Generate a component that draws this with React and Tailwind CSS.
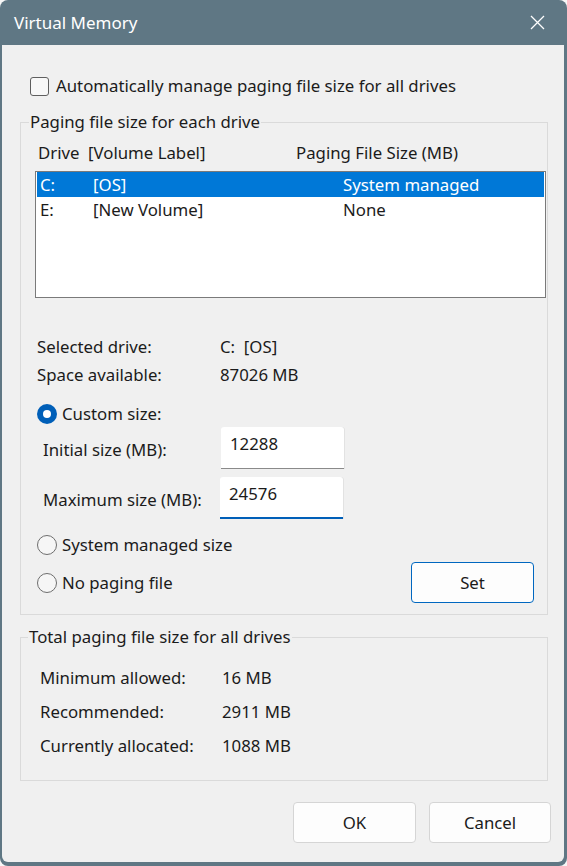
import React, { useState } from 'react';

const FONT = { fontFamily: '"Noto Sans", "Open Sans", sans-serif' };

function Radio({ checked, label, onSelect }) {
  return (
    <label className="flex items-center cursor-default" onClick={onSelect}>
      {checked ? (
        <span className="w-[20px] h-[20px] rounded-full bg-[#005fb8] flex items-center justify-center">
          <span className="w-[8px] h-[8px] rounded-full bg-white" />
        </span>
      ) : (
        <span className="w-[20px] h-[20px] rounded-full border border-[#6e6e6e] bg-[#f6f6f6]" />
      )}
      <span className="ml-[5px]">{label}</span>
    </label>
  );
}

function SizeInput({ value, focused }) {
  return (
    <div
      className={`w-[123px] h-[42px] bg-white rounded-t-[3px] pl-[9px] pt-[4px] shadow-[1px_0_0_#e2e2e2] ${
        focused ? 'border-b-2 border-[#005fb8]' : 'border-b border-[#8a8a8a]'
      }`}
    >
      <span className="leading-[24px]">{value}</span>
    </div>
  );
}

export default function App() {
  const [mode, setMode] = useState('custom');
  const [auto, setAuto] = useState(false);

  return (
    <div className="w-[567px] h-[866px] bg-[#f7f7f7] text-[16.8px] text-[#1b1b1b]" style={FONT}>
      <div className="h-full flex flex-col bg-[#5f7784] rounded-[8px] pl-[2px] pr-[3px] pb-[4px]">
        {/* title bar */}
        <div className="h-[45px] flex items-center justify-between pl-[12px] pr-[18px] text-white">
          <span className="text-[17px]">Virtual Memory</span>
          <svg width="15" height="15" viewBox="0 0 15 15" className="mr-[1px]">
            <path d="M1 1 L14 14 M14 1 L1 14" stroke="white" strokeWidth="1.3" fill="none" />
          </svg>
        </div>

        {/* body */}
        <div className="flex-1 bg-[#f0f0f0] rounded-b-[6px] pl-[18px] pr-[16px] flex flex-col">
          <label className="mt-[31px] h-[20px] flex items-center ml-[10px]" onClick={() => setAuto(!auto)}>
            <span className="w-[19px] h-[19px] rounded-[3px] border border-[#5f5f5f] bg-[#f8f8f8] flex items-center justify-center">
              {auto && (
                <svg width="12" height="10" viewBox="0 0 12 10">
                  <path d="M1 5 L4.5 8.5 L11 1.5" stroke="#1b1b1b" strokeWidth="1.4" fill="none" />
                </svg>
              )}
            </span>
            <span className="ml-[7px]">Automatically manage paging file size for all drives</span>
          </label>

          <fieldset className="mt-[14px] border border-[#dadada] pl-[14px] pr-[1px] pb-[11px]">
            <legend className="ml-[-6px] px-[1px] leading-[24px]">Paging file size for each drive</legend>

            <div className="mt-[7px] h-[24px] flex items-center pl-[3px]">
              <span className="w-[50px]">Drive</span>
              <span className="w-[208px]">[Volume Label]</span>
              <span>Paging File Size (MB)</span>
            </div>

            <div className="mt-[6px] h-[127px] bg-white border border-[#7a7a7a] pl-[1px] pr-[1px]">
              <div className="h-[25px] flex items-center bg-[#0078d7] text-white pl-[3px]">
                <span className="w-[53px]">C:</span>
                <span className="w-[250px]">[OS]</span>
                <span>System managed</span>
              </div>
              <div className="h-[25px] flex items-center pl-[3px]">
                <span className="w-[53px]">E:</span>
                <span className="w-[250px]">[New Volume]</span>
                <span>None</span>
              </div>
            </div>

            <div className="mt-[35px] pl-[2px] grid grid-cols-[183px_1fr]">
              <div className="h-[28px] flex items-center">Selected drive:</div>
              <div className="h-[28px] flex items-center">C:&nbsp;&nbsp;[OS]</div>
              <div className="h-[28px] flex items-center">Space available:</div>
              <div className="h-[28px] flex items-center">87026 MB</div>
            </div>

            <div className="mt-[12px] h-[26px] flex items-center pl-[2px]">
              <Radio checked={mode === 'custom'} label="Custom size:" onSelect={() => setMode('custom')} />
            </div>

            <div className="flex items-start pl-[8px]">
              <span className="w-[178px] mt-[11px] leading-[24px]">Initial size (MB):</span>
              <SizeInput value="12288" />
            </div>
            <div className="mt-[8px] flex items-start pl-[8px]">
              <span className="w-[177px] mt-[11px] leading-[24px]">Maximum size (MB):</span>
              <SizeInput value="24576" focused />
            </div>

            <div className="mt-[13px] h-[26px] flex items-center pl-[2px]">
              <Radio checked={mode === 'system'} label="System managed size" onSelect={() => setMode('system')} />
            </div>
            <div className="mt-[4px] flex items-center justify-between pl-[2px] pr-[12px]">
              <Radio checked={mode === 'none'} label="No paging file" onSelect={() => setMode('none')} />
              <button className="w-[123px] h-[41px] rounded-[4px] border border-[#0067c0] bg-[#fdfdfd]">Set</button>
            </div>
          </fieldset>

          <fieldset className="mt-[10px] border border-[#dadada] pl-[19px] pb-[17px]">
            <legend className="ml-[-12px] px-[1px] leading-[24px]">Total paging file size for all drives</legend>
            <div className="mt-[12px] grid grid-cols-[182px_1fr]">
              <div className="h-[34px] flex items-center">Minimum allowed:</div>
              <div className="h-[34px] flex items-center">16 MB</div>
              <div className="h-[34px] flex items-center">Recommended:</div>
              <div className="h-[34px] flex items-center">2911 MB</div>
              <div className="h-[34px] flex items-center">Currently allocated:</div>
              <div className="h-[34px] flex items-center">1088 MB</div>
            </div>
          </fieldset>

          <div className="mt-[21px] flex justify-end gap-[13px] mr-[-3px]">
            <button className="w-[123px] h-[41px] rounded-[4px] border border-[#d5d5d5] bg-[#fdfdfd]">OK</button>
            <button className="w-[122px] h-[41px] rounded-[4px] border border-[#d5d5d5] bg-[#fdfdfd]">Cancel</button>
          </div>
        </div>
      </div>
    </div>
  );
}
